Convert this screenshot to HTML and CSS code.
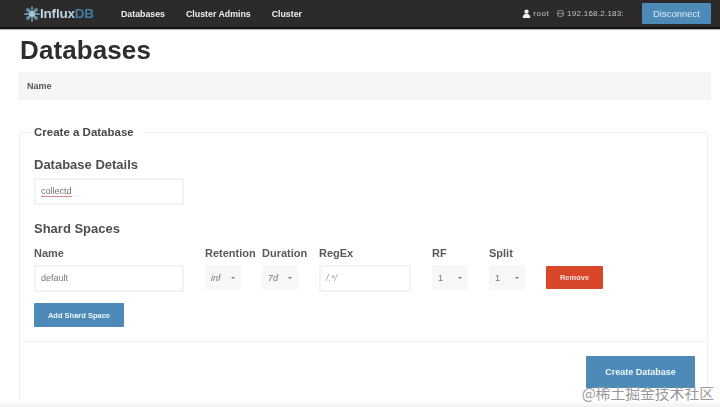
FILE: index.html
```html
<!DOCTYPE html>
<html lang="en">
<head>
<meta charset="utf-8">
<title>InfluxDB</title>
<link rel="stylesheet" href="styles.css">
</head>
<body>
<div class="page">
  <nav class="navbar">
    <div class="brand">
      <svg class="logo" viewBox="0 0 20 20" width="18" height="18" aria-hidden="true">
        <g stroke="#7fb2cb" stroke-width="1.500" stroke-linecap="round">
          <path d="M10 2v16M2 10h16M4.300 4.300l11.400 11.400M15.700 4.300L4.300 15.700"/>
          <path d="M6 3.500l8 13M14 3.500l-8 13M3.500 6l13 8M16.500 6l-13 8" stroke-width=".9"/>
        </g>
        <circle cx="10" cy="10" r="3" fill="#a4cbde"/>
      </svg>
      <span class="brand-a">Influx</span><span class="brand-b">DB</span>
    </div>
    <ul class="nav-links">
      <li>Databases</li>
      <li>Cluster Admins</li>
      <li>Cluster</li>
    </ul>
    <div class="nav-right">
      <svg viewBox="0 0 10 10" width="9" height="9" aria-hidden="true"><circle cx="5" cy="3" r="2.400" fill="#f2f2f2"/><path d="M0.800 10c0-3.400 1.800-4.800 4.200-4.800s4.200 1.400 4.200 4.800z" fill="#f2f2f2"/></svg>
      <span class="nav-user">root</span>
      <svg class="db-icon" viewBox="0 0 10 10" width="7" height="9" aria-hidden="true"><rect x="1" y="1" width="8" height="8" rx="2" fill="none" stroke="#aaa" stroke-width="1.200"/><path d="M1 5h8" stroke="#aaa"/></svg>
      <span class="nav-host">192.168.2.183:</span>
      <button class="btn btn-disconnect" type="button">Disconnect</button>
    </div>
  </nav>

  <main class="content">
    <h1 class="title">Databases</h1>
    <div class="table-head">Name</div>

    <fieldset class="panel">
      <legend>Create a Database</legend>
      <h3 class="sub first">Database Details</h3>
      <div class="input wide"><span class="spell">collectd</span></div>
      <h3 class="sub second">Shard Spaces</h3>
      <div class="shard">
        <div class="col c-name"><label>Name</label><div class="input wide">default</div></div>
        <div class="col c-ret"><label>Retention</label><div class="select"><i>inf</i><b></b></div></div>
        <div class="col c-dur"><label>Duration</label><div class="select"><i>7d</i><b></b></div></div>
        <div class="col c-reg"><label>RegEx</label><div class="input regex"><i>/.*/</i></div></div>
        <div class="col c-rf"><label>RF</label><div class="select"><i>1</i><b></b></div></div>
        <div class="col c-split"><label>Split</label><div class="select"><i>1</i><b></b></div></div>
        <button class="btn btn-remove" type="button">Remove</button>
      </div>
      <button class="btn btn-add" type="button">Add Shard Space</button>
      <hr class="rule">
      <div class="actions"><button class="btn btn-create" type="button">Create Database</button></div>
    </fieldset>
  </main>
  <div class="fade"></div>
  <div class="watermark">@稀土掘金技术社区</div>
</div>
</body>
</html>
```
FILE: styles.css
```css
* { box-sizing: border-box; }
html, body { margin: 0; padding: 0; background: #fff; }
body { width: 720px; height: 407px; overflow: hidden; font-family: "Liberation Sans", Arial, sans-serif; color: #333; }
.page { position: relative; width: 720px; height: 407px; overflow: hidden; }

.navbar { height: 29px; display: flex; align-items: center; background: #2c2b2a; border-bottom: 2px solid #111; box-shadow: 0 1px 1px #bbb; padding: 0 9px 0 23px; filter: blur(.6px); }
.brand { display: flex; align-items: center; width: 98px; font-size: 13.5px; font-weight: 700; letter-spacing: -.2px; }
.logo { margin-right: -1px; flex: none; }
.brand-a { color: #b9d4e2; }
.brand-b { color: #3f7ba3; }
.nav-links { list-style: none; display: flex; gap: 21px; margin: 0; padding: 0; font-size: 8.800px; font-weight: 700; color: #f0f0f0; }
.nav-right { margin-left: auto; display: flex; align-items: center; font-size: 8px; color: #c4c4c4; }
.nav-user { margin: 0 8px 0 2px; letter-spacing: .5px; }
.nav-host { margin: 0 18px 0 3px; letter-spacing: .25px; }
.btn { display: block; border: 0; border-radius: 1px; padding: 0; font-family: inherit; font-weight: 700; color: #eef5fa; background: #4e8ab8; text-align: center; }
.btn-disconnect { width: 69px; height: 21px; margin-top: -1px; font-size: 9.500px; font-weight: 400; color: #dbe9f4; }

.content { padding: 0 9px 0 18px; filter: blur(.6px); }
.title { margin: 0; padding-left: 2px; height: 43px; font-size: 26px; line-height: 43px; font-weight: 700; color: #2e2e2e; letter-spacing: .1px; }
.table-head { height: 28px; padding-left: 9px; background: #f5f5f5; font-size: 9px; line-height: 28px; font-weight: 700; color: #555; }

.panel { margin: 25px 3px 0 1px; padding: 0 14px; height: 291px; border: 1px solid #f0f0f0; border-radius: 1px; min-width: 0; }
.panel legend { padding: 1px 8px 0 0; font-size: 11.500px; font-weight: 700; color: #484848; line-height: 13px; }
.sub { margin: 0; font-size: 13px; line-height: 16px; font-weight: 700; color: #4f4f4f; }
.sub.first { margin-top: 18px; }
.sub.second { margin-top: 16px; }
.sub.first + .input { margin-top: 5px; height: 27px; }
.input { height: 27px; border: 2px solid #f3f3f3; background: #fff; padding-left: 5px; font-size: 9px; line-height: 23px; color: #777; }
.wide { width: 150px; }
.regex { width: 92px; }
.regex i { font-style: italic; color: #999; }
.spell { color: #7a6a6c; border-bottom: 1px solid #d88a92; }

.shard { display: flex; align-items: flex-start; margin-top: 9px; }
.col label { display: block; height: 19px; font-size: 11px; line-height: 14px; font-weight: 700; color: #5a5a5a; white-space: nowrap; }
.c-name { width: 171px; }
.c-ret { width: 57px; }
.c-dur { width: 57px; }
.c-reg { width: 113px; }
.c-rf { width: 57px; }
.c-split { width: 57px; }
.select { display: flex; align-items: center; justify-content: space-between; width: 36px; height: 25px; padding: 0 6px; background: #f7f7f7; border-radius: 2px; font-size: 9px; color: #777; }
.select i { font-style: normal; }
.c-ret .select i, .c-dur .select i { font-style: italic; }
.select b { width: 0; height: 0; border-left: 2px solid transparent; border-right: 2px solid transparent; border-top: 2px solid #777; }
.btn-remove { width: 57px; height: 23px; margin-top: 20px; background: #d9472b; font-size: 7.500px; color: #f6e1dc; }
.btn-add { width: 90px; height: 24px; margin-top: 11px; font-size: 7.500px; }
.rule { height: 1px; margin: 14px -13px 0 -10px; border: 0; background: #f0f0f0; }
.actions { display: flex; justify-content: flex-end; margin: 14px 0 0 0; }
.btn-create { width: 109px; height: 32px; font-size: 9px; margin-right: -2px; }

.fade { position: absolute; left: 0; right: 0; bottom: 0; height: 7px; background: linear-gradient(#fff, #f1f1f1); }
.watermark { position: absolute; right: 6px; bottom: 5px; font-family: "Noto Sans CJK SC", serif; font-size: 14.800px; line-height: 18px; color: #999; white-space: nowrap; }
```
